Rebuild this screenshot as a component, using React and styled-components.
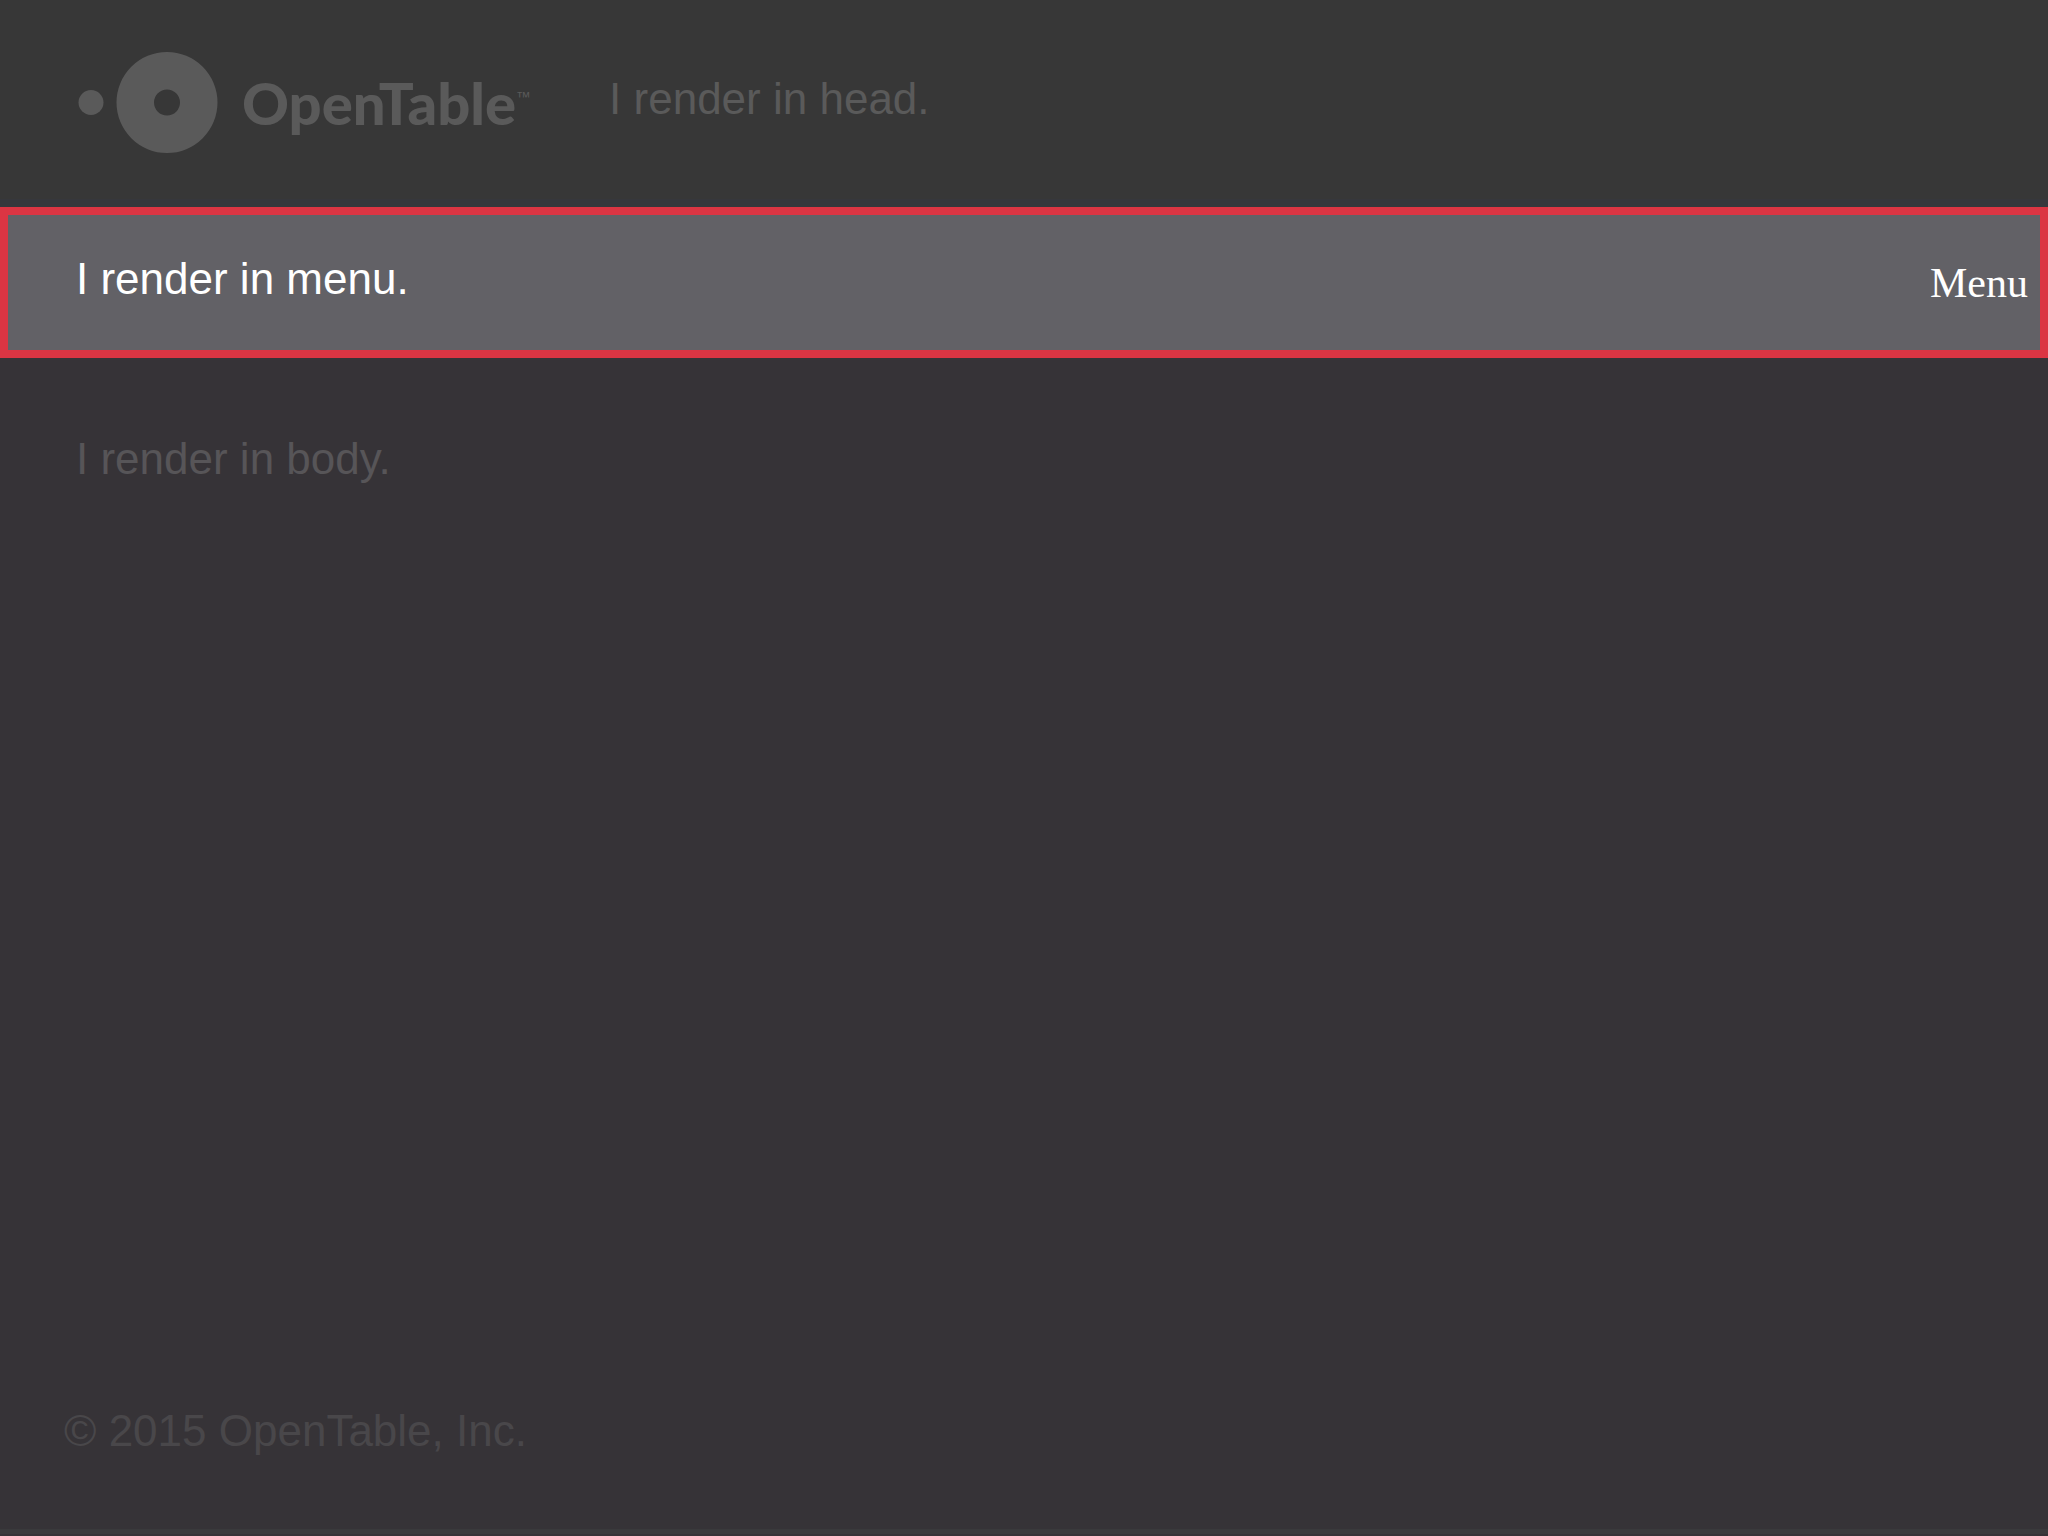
import React from "react";
import styled, { createGlobalStyle } from "styled-components";

const GlobalStyle = createGlobalStyle`
  * { box-sizing: border-box; }
  body {
    margin: 0;
    background: #363337;
    font-family: "Liberation Sans", Arial, sans-serif;
  }
`;

const Page = styled.div`
  display: flex;
  flex-direction: column;
  min-height: 100vh;
`;

const Header = styled.header`
  display: flex;
  align-items: center;
  gap: 78px;
  padding: 52px 76px 46px;
  border-bottom: 8px solid #36373c;
  background: #373737;
`;

const Brand = styled.a`
  display: flex;
  align-items: center;
  gap: 24px;
  color: #5a5a5a;
  text-decoration: none;
`;

const Mark = styled.svg`
  display: block;
  width: 142px;
  height: 101px;
  fill: currentColor;
`;

const Wordmark = styled.span`
  display: flex;
  align-items: flex-start;
  font: 900 58px/64px Lato, sans-serif;
`;

const Trademark = styled.span`
  font: 400 15px/52px "Liberation Sans", Arial, sans-serif;
`;

const Text = styled.p`
  margin: 0;
  padding-bottom: 8px;
  font-size: 44px;
  line-height: 52px;
  color: ${(p) => p.$color};
`;

const MenuBar = styled.nav`
  display: flex;
  align-items: center;
  justify-content: space-between;
  min-height: 151px;
  padding: 0 12px 0 68px;
  border: 8px solid #db3543;
  background: #626166;
`;

const MenuButton = styled.button`
  padding: 0;
  border: 0;
  background: none;
  color: #fff;
  font: 42px/52px "Liberation Serif", "Times New Roman", serif;
  cursor: pointer;
`;

const Main = styled.main`
  flex: 1;
  padding: 75px 76px 0;
`;

const Footer = styled.footer`
  padding: 0 64px 64px;
`;

const Edge = styled.div`
  height: 5px;
  margin-bottom: 2px;
  background: #3a3a3c;
`;

export default function App() {
  return (
    <Page>
      <GlobalStyle />
      <Header>
        <Brand href="#" aria-label="OpenTable">
          <Mark viewBox="0 0 142 101" aria-hidden="true">
            <circle cx="15" cy="50.5" r="12.5" />
            <path
              fillRule="evenodd"
              d="M91 0a50.5 50.5 0 1 0 0 101a50.5 50.5 0 1 0 0-101zM91 37.5a13 13 0 1 1 0 26a13 13 0 1 1 0-26z"
            />
          </Mark>
          <Wordmark>
            OpenTable<Trademark>™</Trademark>
          </Wordmark>
        </Brand>
        <Text $color="#5a5a5a">I render in head.</Text>
      </Header>
      <MenuBar>
        <Text $color="#fff">I render in menu.</Text>
        <MenuButton type="button">Menu</MenuButton>
      </MenuBar>
      <Main>
        <Text $color="#575558">I render in body.</Text>
      </Main>
      <Footer>
        <Text $color="#49474a">© 2015 OpenTable, Inc.</Text>
      </Footer>
      <Edge />
    </Page>
  );
}
